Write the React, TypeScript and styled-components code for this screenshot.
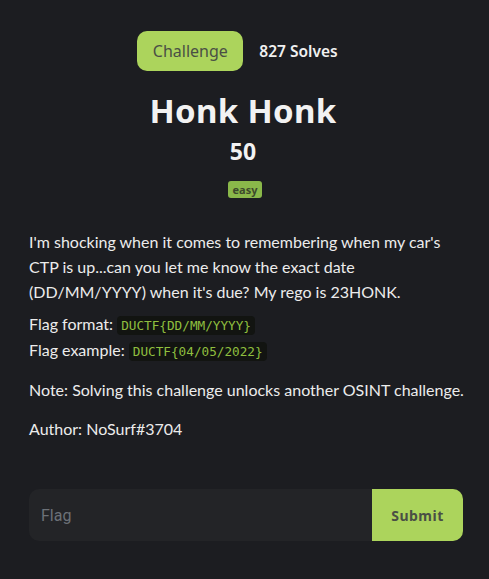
import React from "react";
import styled, { createGlobalStyle } from "styled-components";

const Global = createGlobalStyle`
  html, body { margin: 0; padding: 0; background: #1c1d21; }
  body { font-family: Lato, "Liberation Sans", sans-serif; color: #e8e8e8; }
  * { box-sizing: border-box; }
`;

const Modal = styled.div`
  width: 489px;
  height: 579px;
  background: #1c1d21;
  padding: 31px 18px 0 29px;
  display: flex;
  flex-direction: column;
`;

const TabRow = styled.div`
  display: flex;
  justify-content: center;
  align-items: center;
  gap: 16px;
  padding-right: 25px;
`;

const TabButton = styled.div`
  height: 40px;
  width: 106px;
  border-radius: 10px;
  background: #acd45c;
  color: #4a4f45;
  font-family: "Noto Sans", sans-serif;
  font-size: 16px;
  display: flex;
  align-items: center;
  justify-content: center;
`;

const Solves = styled.div`
  font-family: "Noto Sans", sans-serif;
  font-weight: 600;
  font-size: 15.5px;
  color: #f0f0f0;
`;

const Header = styled.div`
  display: flex;
  flex-direction: column;
  align-items: center;
  padding-right: 14px;
`;

const Title = styled.h1`
  margin: 18px 0 0;
  font-family: "Noto Sans", sans-serif;
  font-weight: 700;
  font-size: 33px;
  line-height: 44px;
  letter-spacing: 0.3px;
  color: #f2f2f2;
`;

const Value = styled.div`
  margin-top: 3px;
  font-family: "Noto Sans", sans-serif;
  font-weight: 700;
  font-size: 23px;
  line-height: 30px;
  color: #f2f2f2;
`;

const Badge = styled.span`
  margin-top: 15px;
  margin-left: 4px;
  background: #8ab84a;
  color: #3d4a2c;
  font-family: "Noto Sans", sans-serif;
  font-weight: 700;
  font-size: 11px;
  line-height: 17px;
  padding: 0 5px;
  border-radius: 3px;
`;

const Description = styled.div`
  margin-top: 31px;
  font-family: Lato, "Liberation Sans", sans-serif;
  font-size: 16px;
  color: #ececec;
`;

const Para = styled.p<{ $gap: number; $lh?: number }>`
  margin: 0 0 ${(p) => p.$gap}px;
  line-height: ${(p) => p.$lh ?? 25}px;
`;

const Code = styled.code`
  font-family: "DejaVu Sans Mono", monospace;
  font-size: 12.7px;
  color: #8fbf3f;
  background: #121411;
  padding: 2px 4px;
  border-radius: 4px;
`;

const Spacer = styled.div`
  flex: 1;
`;

const Form = styled.form`
  display: flex;
  height: 52px;
  width: 434px;
  margin-bottom: 38px;
  border-radius: 10px;
  overflow: hidden;
`;

const Input = styled.input`
  flex: 1;
  min-width: 0;
  background: #232427;
  border: none;
  outline: none;
  color: #ddd;
  font-family: Roboto, sans-serif;
  font-size: 16px;
  padding: 0 12px;
  &::placeholder { color: #6c7177; }
`;

const Submit = styled.button`
  width: 91px;
  background: #acd45c;
  color: #4a4f45;
  border: none;
  font-family: "Noto Sans", sans-serif;
  font-weight: 700;
  font-size: 14px;
  letter-spacing: 0.5px;
`;

export default function App() {
  return (
    <>
      <Global />
      <Modal>
        <TabRow>
          <TabButton>Challenge</TabButton>
          <Solves>827 Solves</Solves>
        </TabRow>
        <Header>
          <Title>Honk Honk</Title>
          <Value>50</Value>
          <Badge>easy</Badge>
        </Header>
        <Description>
          <Para $gap={8}>
            I'm shocking when it comes to remembering when my car's CTP is
            up...can you let me know the exact date (DD/MM/YYYY) when it's due?
            My rego is 23HONK.
          </Para>
          <Para $gap={13} $lh={24}>
            Flag format: <Code>DUCTF{"{DD/MM/YYYY}"}</Code>
            <br />
            Flag example: <Code>DUCTF{"{04/05/2022}"}</Code>
          </Para>
          <Para $gap={14}>Note: Solving this challenge unlocks another OSINT challenge.</Para>
          <Para $gap={0}>Author: NoSurf#3704</Para>
        </Description>
        <Spacer />
        <Form onSubmit={(e) => e.preventDefault()}>
          <Input placeholder="Flag" />
          <Submit type="submit">Submit</Submit>
        </Form>
      </Modal>
    </>
  );
}
